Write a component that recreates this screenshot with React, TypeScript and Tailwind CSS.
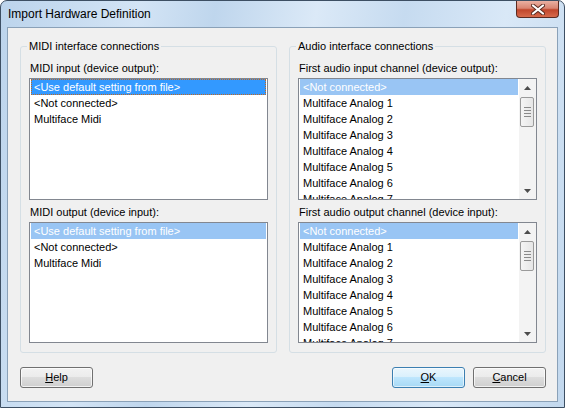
import React from "react";

const midiItems = ["<Use default setting from file>", "<Not connected>", "Multiface Midi"];
const audioItems = [
  "<Not connected>",
  "Multiface Analog 1",
  "Multiface Analog 2",
  "Multiface Analog 3",
  "Multiface Analog 4",
  "Multiface Analog 5",
  "Multiface Analog 6",
  "Multiface Analog 7",
];

const Arrow: React.FC<{ up?: boolean }> = ({ up }) => (
  <svg width="7" height="4" viewBox="0 0 7 4">
    {up ? <path d="M0 4 L3.5 0 L7 4 Z" fill="#4d4d4d" /> : <path d="M0 0 L3.5 4 L7 0 Z" fill="#4d4d4d" />}
  </svg>
);

// vertical scrollbar used by the audio lists
const ScrollBar: React.FC = () => (
  <div className="flex w-[17px] shrink-0 flex-col bg-[#f3f3f3]">
    <div className="flex h-[17px] items-center justify-center">
      <Arrow up />
    </div>
    <div className="flex-1">
      <div className="mx-[1px] mt-[1px] flex h-[30px] w-[14px] flex-col items-center justify-center gap-[2px] rounded-[2px] border border-[#9a9a9a] bg-[linear-gradient(90deg,#f5f5f5,#e6e6e6)]">
        <div className="h-[1px] w-[7px] bg-[#8a8a8a]" />
        <div className="h-[1px] w-[7px] bg-[#8a8a8a]" />
        <div className="h-[1px] w-[7px] bg-[#8a8a8a]" />
        <div className="h-[1px] w-[7px] bg-[#8a8a8a]" />
      </div>
    </div>
    <div className="flex h-[17px] items-center justify-center">
      <Arrow />
    </div>
  </div>
);

type ListProps = {
  items: string[];
  focused?: boolean;
  scroll?: boolean;
  height: string;
};

const ListBox: React.FC<ListProps> = ({ items, focused, scroll, height }) => (
  <div className={`flex ${height} border border-[#828790] bg-white`}>
    <div className="flex-1 overflow-hidden pl-[1px] pr-[1px]">
      {items.map((item, i) => (
        <div
          key={item}
          className={
            i === 0
              ? focused
                ? "h-[16px] border border-dotted border-[#c2671f] bg-[#3399ff] pl-[2px] text-[11px] leading-[14px] text-white"
                : "h-[16px] bg-[#99c5f4] pl-[3px] text-[11px] leading-[16px] text-white"
              : "h-[16px] pl-[3px] text-[11px] leading-[16px] whitespace-nowrap text-black"
          }
        >
          {item}
        </div>
      ))}
    </div>
    {scroll && <ScrollBar />}
  </div>
);

const Group: React.FC<{ title: string; children: React.ReactNode }> = ({ title, children }) => (
  <div className="relative h-[307px] w-[257px] rounded-[3px] border border-[#d5dfe5] px-[8px] pt-[15px] pb-[9px]">
    <span className="absolute top-[-8px] left-[6px] bg-[#f0f0f0] px-[2px] text-[11px] leading-[14px] text-black">
      {title}
    </span>
    {children}
  </div>
);

const Label: React.FC<{ text: string; top?: boolean }> = ({ text, top }) => (
  <div className={`${top ? "" : "mt-[6px]"} mb-[3px] pl-[1px] text-[11px] leading-[13px] text-black`}>{text}</div>
);

const Button: React.FC<{ def?: boolean; children: React.ReactNode }> = ({ def, children }) => (
  <button
    className={
      def
        ? "h-[21px] w-[73px] rounded-[3px] border border-[#3c7fb1] bg-[linear-gradient(180deg,#eaf6fd_0%,#d9f0fc_50%,#bee6fd_50%,#a7d9f5_100%)] text-[11px] text-black shadow-[inset_0_0_0_1px_rgba(255,255,255,0.6)]"
        : "h-[21px] w-[73px] rounded-[3px] border border-[#707070] bg-[linear-gradient(180deg,#f2f2f2_0%,#ebebeb_50%,#dddddd_50%,#cfcfcf_100%)] text-[11px] text-black shadow-[inset_0_0_0_1px_rgba(255,255,255,0.7)]"
    }
  >
    {children}
  </button>
);

export default function App() {
  return (
    <div className="h-[408px] w-[565px] bg-white font-['Liberation_Sans',Arial,sans-serif]">
      <div className="flex h-[408px] w-[565px] flex-col rounded-t-[7px] border border-[#3d4f63] bg-[linear-gradient(100deg,#bcd4ec_0%,#d3e4f5_22%,#bfd6ed_34%,#dbe9f7_50%,#c6dbf0_64%,#d9e8f7_80%,#c2d8ee_100%)]">
        {/* title bar */}
        <div className="flex h-[26px] items-start justify-between">
          <span className="mt-[6px] ml-[7px] text-[12px] leading-[14px] text-black">Import Hardware Definition</span>
          <div className="mr-[5px] flex h-[17px] w-[43px] items-center justify-center rounded-b-[4px] border border-t-0 border-[#5b2a21] bg-[linear-gradient(180deg,#eab0a2_0%,#d98572_45%,#c0462c_55%,#d76a4c_100%)]">
            <svg width="14" height="11" viewBox="0 0 14 11">
              <path d="M2 1.5 L12 9.5 M12 1.5 L2 9.5" stroke="#5a2a20" strokeWidth="4" strokeLinecap="round" />
              <path d="M2 1.5 L12 9.5 M12 1.5 L2 9.5" stroke="#ffffff" strokeWidth="2.2" strokeLinecap="round" />
            </svg>
          </div>
        </div>

        {/* client area */}
        <div className="mx-[6px] mb-[5px] flex h-[375px] flex-col border border-[#8aa1b8] bg-[#f0f0f0] pt-[18px] pr-[11px] pl-[12px]">
          <div className="flex gap-[12px]">
            <Group title="MIDI interface connections">
              <Label text="MIDI input (device output):" top />
              <ListBox items={midiItems} focused height="h-[122px]" />
              <Label text="MIDI output (device input):" />
              <ListBox items={midiItems} height="h-[121px]" />
            </Group>
            <Group title="Audio interface connections">
              <Label text="First audio input channel (device output):" top />
              <ListBox items={audioItems} scroll height="h-[122px]" />
              <Label text="First audio output channel (device input):" />
              <ListBox items={audioItems} scroll height="h-[121px]" />
            </Group>
          </div>

          <div className="mt-[14px] flex items-center">
            <Button>
              <span className="underline">H</span>elp
            </Button>
            <div className="flex-1" />
            <Button def>
              <span className="underline">O</span>K
            </Button>
            <div className="w-[8px]" />
            <Button>
              <span className="underline">C</span>ancel
            </Button>
          </div>
        </div>
      </div>
    </div>
  );
}
